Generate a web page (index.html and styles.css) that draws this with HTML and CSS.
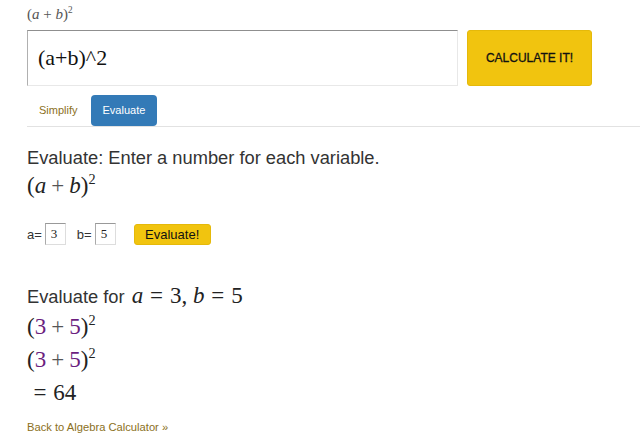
FILE: index.html
```html
<!DOCTYPE html>
<html lang="en">
<head>
    <meta charset="UTF-8">
    <title>Algebra Calculator - Evaluate</title>
    <link rel="stylesheet" href="styles.css">
</head>
<body>
    <div class="page">
        <div class="preview math">(<i>a</i> + <i>b</i>)<sup>2</sup></div>

        <form class="calc-form">
            <input type="text" class="expr-input" value="(a+b)^2">
            <button type="button" class="calc-btn">CALCULATE IT!</button>
        </form>

        <ul class="tabs">
            <li><a href="#" class="tab">Simplify</a></li>
            <li><a href="#" class="tab active">Evaluate</a></li>
        </ul>

        <h3 class="prompt">Evaluate: Enter a number for each variable.</h3>
        <div class="expr math">(<i>a</i><span class="op">+</span><i>b</i>)<sup>2</sup></div>

        <div class="vars">
            <label>a=</label><input type="text" class="var-input" value="3">
            <label class="second">b=</label><input type="text" class="var-input" value="5">
            <button type="button" class="eval-btn">Evaluate!</button>
        </div>

        <h3 class="result-title">Evaluate for <span class="math inline"><i>a</i><span class="rel">=</span>3, <i>b</i><span class="rel">=</span>5</span></h3>
        <div class="step math">(<span class="num">3</span><span class="op">+</span><span class="num">5</span>)<sup>2</sup></div>
        <div class="step math">(<span class="num">3</span><span class="op">+</span><span class="num">5</span>)<sup>2</sup></div>
        <div class="step math answer"><span class="rel first">=</span>64</div>

        <a href="#" class="back">Back to Algebra Calculator &raquo;</a>
    </div>
</body>
</html>
```

FILE: styles.css
```css
body {
    margin: 0;
    background-color: white;
    color: #333;
    font-family: "Liberation Sans", Arial, sans-serif;
}
.page {
    padding: 3px 0 0 27px;
}
.math {
    font-family: "Liberation Serif", "Times New Roman", serif;
    color: #222;
}
.math sup {
    font-size: 0.62em;
    vertical-align: 0.62em;
    line-height: 0;
}
.math .op {
    color: #555;
    margin: 0 0.22em;
}
.math .rel {
    margin: 0 0.3em;
}
.math .rel.first {
    margin-left: 0.28em;
}
.preview {
    font-size: 15px;
    color: #555;
    height: 27px;
    line-height: 22px;
}
.calc-form {
    display: flex;
    gap: 9px;
    margin: 0;
}
.expr-input {
    width: 431px;
    height: 56px;
    box-sizing: border-box;
    border: 1px solid;
    border-color: #8f8f8f #e8e8e8 #e8e8e8 #b0b0b0;
    padding: 0 10px;
    font-family: "Liberation Serif", "Times New Roman", serif;
    font-size: 22px;
    color: #111;
    outline: none;
}
.calc-btn {
    width: 125px;
    height: 56px;
    background-color: #f1c40f;
    border: 1px solid #e5b90a;
    border-radius: 3px;
    font-family: "Liberation Sans", Arial, sans-serif;
    font-size: 12px;
    color: #111;
    -webkit-text-stroke: 0.3px #111;
    cursor: pointer;
}
.tabs {
    list-style: none;
    margin: 9px 0 0 0;
    padding: 0;
    display: flex;
    gap: 1px;
    border-bottom: 1px solid #e2e2e2;
}
.tab {
    display: block;
    height: 31px;
    line-height: 31px;
    padding: 0 12px;
    font-size: 11px;
    color: #8b7022;
    text-decoration: none;
}
.tab.active {
    background-color: #337ab7;
    color: white;
    border-radius: 4px;
}
.prompt {
    margin: 21px 0 0 0;
    font-size: 18.3px;
    font-weight: normal;
    line-height: 20px;
}
.expr {
    font-size: 23px;
    height: 40px;
    line-height: 36px;
}
.vars {
    display: flex;
    align-items: center;
    font-size: 13px;
    margin-top: 15px;
}
.vars .second {
    margin-left: 11px;
}
.var-input {
    width: 21px;
    height: 22px;
    box-sizing: border-box;
    margin-left: 3px;
    border: 1px solid;
    border-color: #999 #ddd #ddd #aaa;
    padding: 0 0 0 5px;
    font-family: "Liberation Serif", "Times New Roman", serif;
    font-size: 13px;
    color: #222;
}
.eval-btn {
    margin-left: 18px;
    width: 77px;
    height: 21px;
    background-color: #f1c40f;
    border: 1px solid #e5b90a;
    border-radius: 3px;
    font-family: "Liberation Sans", Arial, sans-serif;
    font-size: 13px;
    color: #111;
    padding: 0;
}
.result-title {
    margin: 38px 0 0 0;
    font-size: 18.3px;
    font-weight: normal;
    line-height: 26px;
}
.result-title .inline {
    font-size: 23px;
    margin-left: 2px;
}
.step {
    font-size: 23px;
    line-height: 33px;
}
.step:first-of-type {
    margin-top: 4px;
}
.step .num {
    color: #6c1f7f;
}
.back {
    display: inline-block;
    margin-top: 12px;
    font-size: 11.2px;
    color: #8b7022;
    text-decoration: none;
}
```
